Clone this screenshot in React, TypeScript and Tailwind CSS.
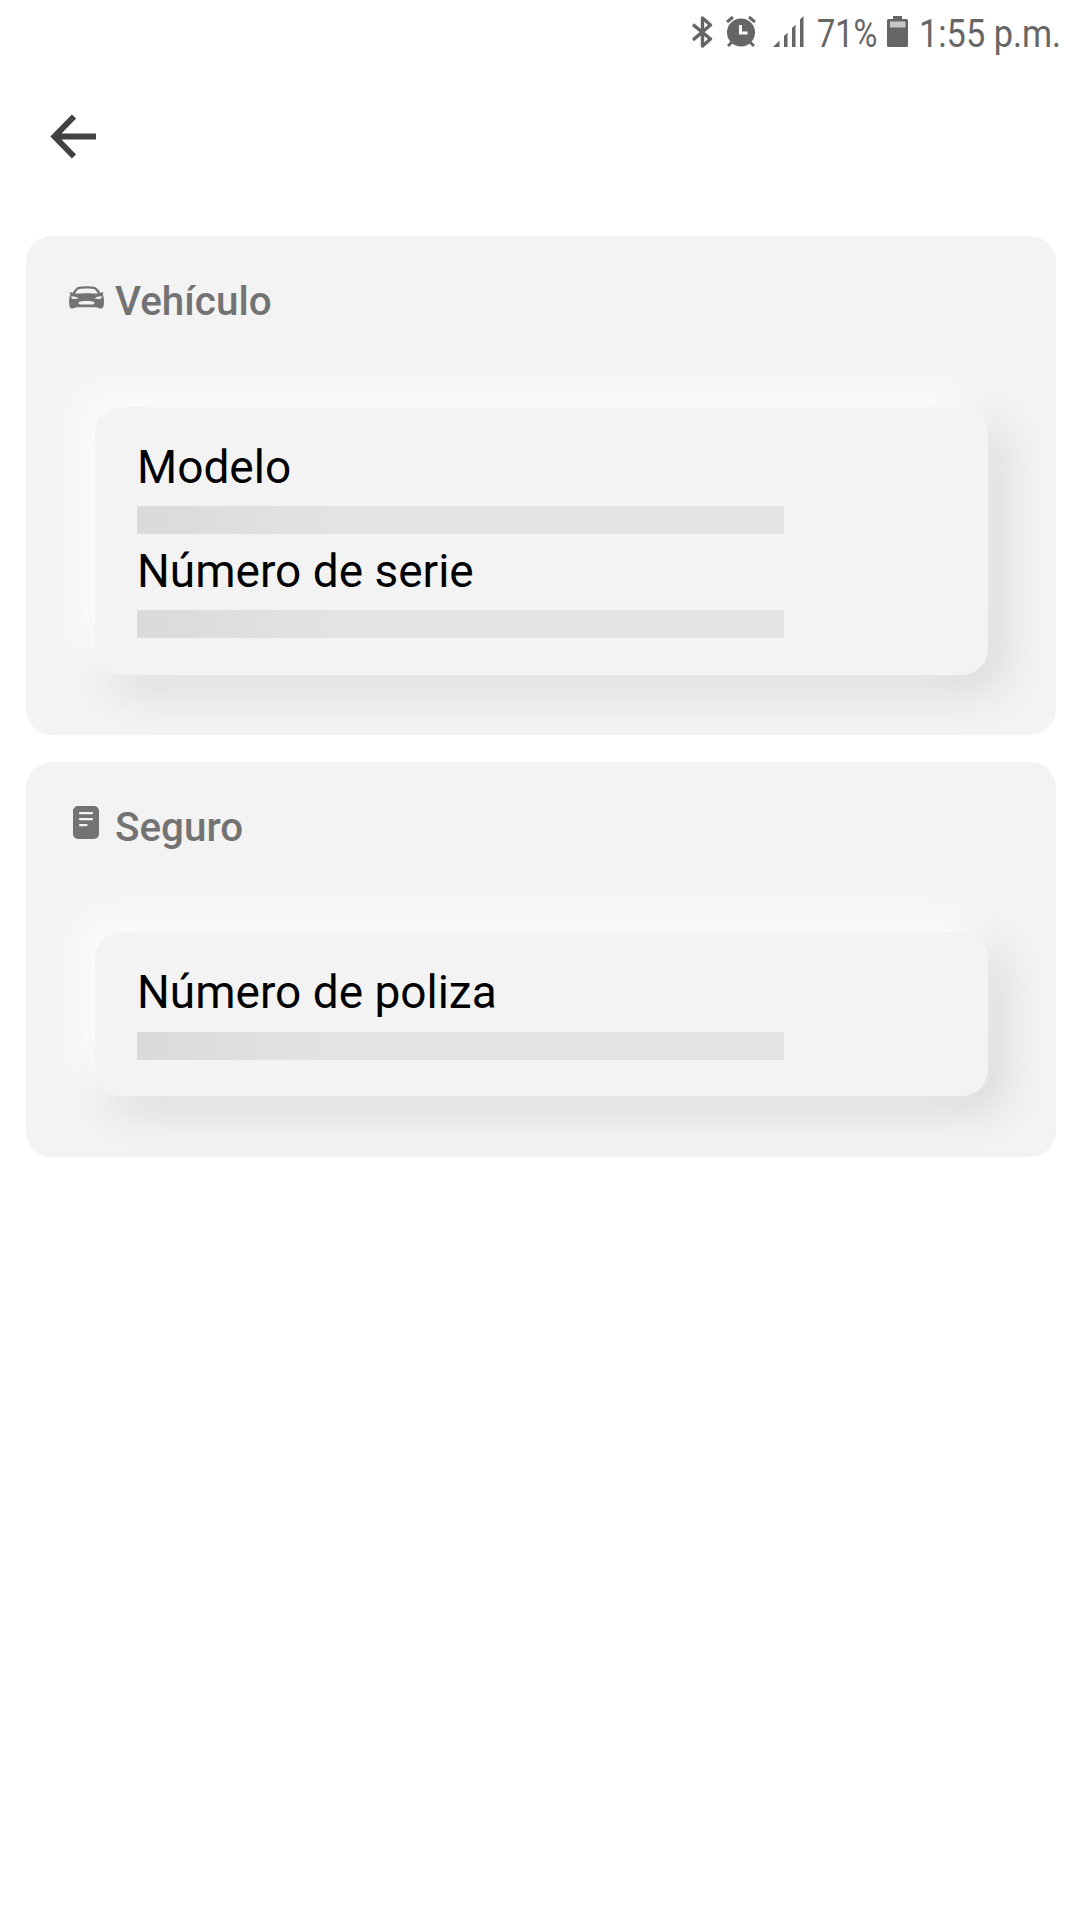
import React from "react";

function StatusBar() {
  return (
    <div className="flex h-[68px] items-start text-[#666666]">
      <svg className="ml-[692px] mt-[15px] h-[34px] w-[21px] shrink-0" viewBox="0 0 21 34" fill="none" stroke="currentColor" strokeWidth="3.400">
        <path d="M1 9.5 18.5 24 10.5 31V3L18.5 10 1 25" strokeLinejoin="round" />
      </svg>
      <svg className="ml-[12px] mt-[15px] h-[33px] w-[32px] shrink-0" viewBox="0 0 32 33">
        <circle cx="16" cy="17.5" r="14" fill="currentColor" />
        <path d="M2 7 8 2M24 2l6 5M7 27l-4 4M25 27l4 4" stroke="currentColor" strokeWidth="3" />
        <path d="M15.5 10v8h7" fill="none" stroke="#fff" strokeWidth="3" />
      </svg>
      <svg className="ml-[16px] mt-[16px] h-[31px] w-[31px] shrink-0" viewBox="0 0 31 31" fill="currentColor">
        <path d="M0 31 6.5 24.5V31zM11 20l3.5-3.5V31H11zM19 12l3.5-3.5V31H19zM27 3.500l3.500-3.500V31H27z" />
      </svg>
      <div className="ml-[13px] mt-[12px] h-[45px] w-[62px] shrink-0">
        <span className="block w-max origin-left scale-x-[0.835] whitespace-pre text-[39px] leading-[45px]">71%</span>
      </div>
      <svg className="ml-[8px] mt-[16px] h-[31px] w-[21px] shrink-0" viewBox="0 0 21 31">
        <path d="M6 0h9v3h4.500Q21 3 21 4.500V29.500Q21 31 19.500 31H1.500Q0 31 0 29.500V4.500Q0 3 1.500 3H6z" fill="currentColor" />
        <path d="M3 5.500h15.500v6H3z" fill="#c6c6c6" />
      </svg>
      <div className="ml-[11px] mt-[12px] h-[45px] w-[142px] shrink-0">
        <span className="block w-max origin-left scale-x-[0.88] whitespace-pre text-[39px] leading-[45px]">1:55 p.m.</span>
      </div>
    </div>
  );
}

function CarIcon() {
  return (
    <svg className="h-[23px] w-[35px]" viewBox="0 0 35 23">
      <path
        fillRule="evenodd"
        fill="currentColor"
        d="M3.500 7C5.500 3.500 7 1.500 10 .7 13 0 22 0 25 .7 28 1.500 29.500 3.500 31.500 7L33 6.300C34.800 6.300 34.800 8 33.600 8.500 35 11 35.200 14 34.900 17 34.800 21 34 22.500 31.500 22.500 29.500 22.500 29 21.200 27.500 21.200H7.500C6 21.200 5.500 22.500 3.500 22.500 1 22.500.3 21 .2 17 0 14 .1 11 1.500 8.500.3 8 .3 6.300 2 6.300zM6.200 7.800C11 7 24 7 28.800 7.800 27.500 5 26.500 3.600 24.500 3.100 21 2.400 14 2.400 10.500 3.100 8.500 3.600 7.500 5 6.200 7.800zM2.200 10.300C2.200 12.500 3 13 5 13L9.500 12.600C8 11 5.500 10.300 2.200 10.300zM32.800 10.300C29.500 10.300 27 11 25.500 12.600L30 13C32 13 32.800 12.500 32.800 10.300zM9.500 16.300C11.500 14.500 23.500 14.500 25.500 16.300 25.500 18.300 24.500 18.500 22.500 18.500H12.500C10.500 18.500 9.500 18.300 9.500 16.300z"
      />
    </svg>
  );
}

function PolicyIcon() {
  return (
    <svg className="ml-[4px] h-[33px] w-[26px]" viewBox="0 0 26 33">
      <rect width="26" height="33" rx="5" fill="currentColor" />
      <path d="M7 7.200h12M7 13.200h12M7 19.200h6.500" stroke="#f3f3f3" strokeWidth="2.200" strokeLinecap="round" />
    </svg>
  );
}

function Field({ label, gap }: { label: string; gap: string }) {
  return (
    <div className={`flex flex-col ${gap}`}>
      <div className="text-[46px] leading-[54px] text-black">{label}</div>
      <div className="h-[28px] w-[647px] bg-linear-to-r from-[#dadada] to-[#e3e3e3] to-30%" />
    </div>
  );
}

type SectionProps = {
  title: string;
  icon: React.ReactNode;
  iconClass: string;
  panelClass: string;
  fieldGap: string;
  fields: string[];
};

function Section({ title, icon, iconClass, panelClass, fieldGap, fields }: SectionProps) {
  return (
    <section className="overflow-hidden rounded-[26px] bg-[#f3f3f3] pt-[42px] pr-[68px] pl-[43px]">
      <header className="flex h-[48px] text-[#737373]">
        <div className={iconClass}>{icon}</div>
        <h2 className="text-[40.400px] leading-[48px] font-medium">{title}</h2>
      </header>
      <div className={`ml-[26px] flex flex-col gap-[10px] rounded-[26px] bg-[#f3f3f3] px-[42px] pt-[33px] shadow-[-16px_-16px_40px_#fdfdfd,16px_16px_40px_#d9d9d9] ${panelClass}`}>
        {fields.map((f) => (
          <Field key={f} label={f} gap={fieldGap} />
        ))}
      </div>
    </section>
  );
}

export default function App() {
  return (
    <main className="h-[1920px] w-[1080px] overflow-hidden bg-white font-[Roboto,sans-serif]">
      <StatusBar />
      <nav className="flex h-[168px] pt-[46px] pl-[50px]">
        <svg className="h-[45px] w-[46px]" viewBox="0 0 46 45" fill="none" stroke="#424242" strokeWidth="6">
          <path d="M46 22.500H5M24 2.500 4.500 22.500 24 42.500" />
        </svg>
      </nav>
      <div className="flex flex-col gap-[27px] pr-[24px] pl-[26px]">
        <div className="grid h-[499px]">
          <Section
            title="Vehículo"
            icon={<CarIcon />}
            iconClass="w-[46px] pt-[8px]"
            panelClass="mt-[81px] h-[268px]"
            fieldGap="gap-[12px]"
            fields={["Modelo", "Número de serie"]}
          />
        </div>
        <div className="grid h-[395px]">
          <Section
            title="Seguro"
            icon={<PolicyIcon />}
            iconClass="w-[46px] pt-[2px]"
            panelClass="mt-[80px] h-[164px]"
            fieldGap="gap-[13px]"
            fields={["Número de poliza"]}
          />
        </div>
      </div>
    </main>
  );
}
